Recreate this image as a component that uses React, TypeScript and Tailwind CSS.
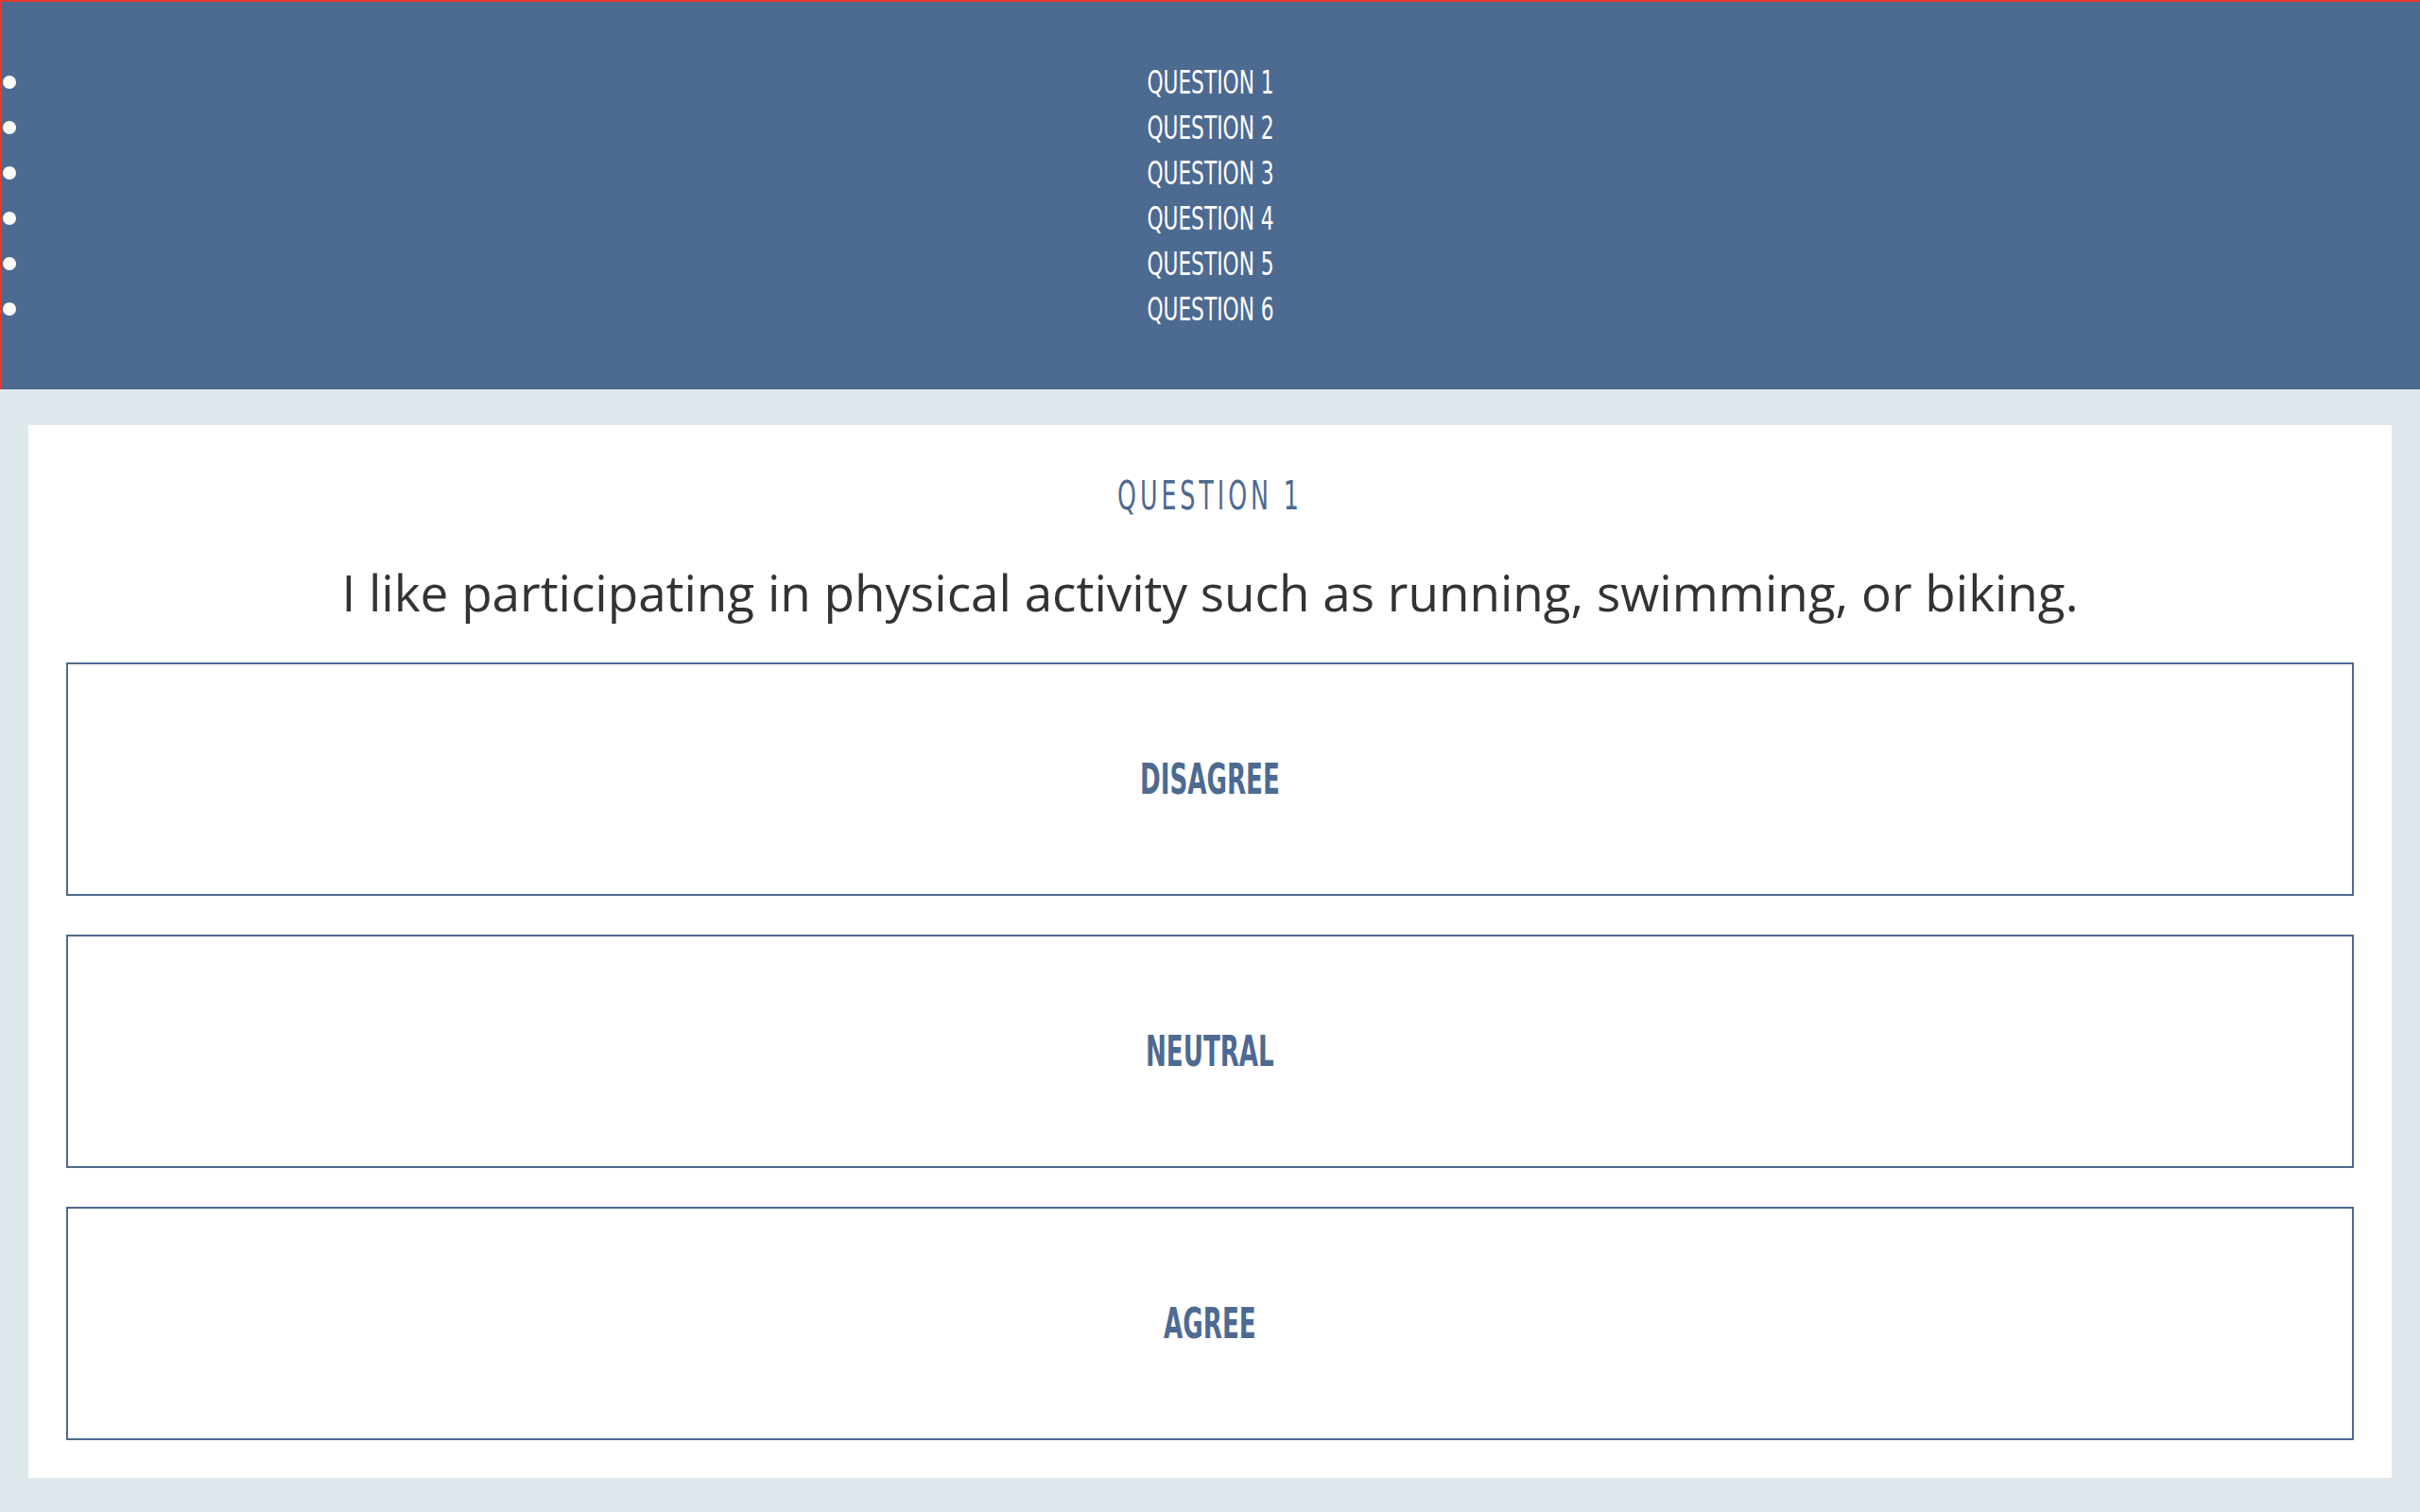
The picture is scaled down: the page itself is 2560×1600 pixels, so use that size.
import React from 'react';

const questions = ['QUESTION 1', 'QUESTION 2', 'QUESTION 3', 'QUESTION 4', 'QUESTION 5', 'QUESTION 6'];
const answers = ['DISAGREE', 'NEUTRAL', 'AGREE'];

const condensed = { fontFamily: '"Liberation Sans Narrow", "DejaVu Sans Condensed", "Liberation Sans", sans-serif' };

const App: React.FC = () => {
  return (
    <div className="min-h-screen bg-[#dee8ed] flex flex-col">
      {/* Question nav */}
      <header className="bg-[#4d6a91] border-t-2 border-l-2 border-[#e5392b] h-[412px] flex items-center">
        <ul className="w-full">
          {questions.map((q) => (
            <li key={q} className="grid h-12 items-center">
              <span className="col-start-1 row-start-1 justify-self-start ml-[1px] w-[14px] h-[14px] rounded-full bg-white" />
              <span
                className="col-start-1 row-start-1 justify-self-center text-white text-[34px] leading-none scale-x-[0.71]"
                style={condensed}
              >
                {q}
              </span>
            </li>
          ))}
        </ul>
      </header>

      {/* Question card */}
      <main className="bg-white mx-[30px] mt-[38px] mb-[36px] px-10 pt-[51px] pb-10">
        <h2
          className="text-center text-[#4d6a91] text-[42px] leading-[48px] tracking-[0.14em] scale-x-[0.67]"
          style={condensed}
        >
          QUESTION 1
        </h2>
        <p className="mt-[46px] text-center text-[#333333] text-[53px] leading-[64px] font-['Open_Sans',sans-serif]">
          I like participating in physical activity such as running, swimming, or biking.
        </p>
        <div className="mt-[42px] flex flex-col gap-[41px]">
          {answers.map((a) => (
            <button
              key={a}
              className="h-[247px] border-2 border-[#4d6a91] bg-white flex items-center justify-center"
            >
              <span className="text-[#4d6a91] text-[44px] font-bold leading-none scale-x-[0.66]" style={condensed}>
                {a}
              </span>
            </button>
          ))}
        </div>
      </main>
    </div>
  );
};

export default App;
